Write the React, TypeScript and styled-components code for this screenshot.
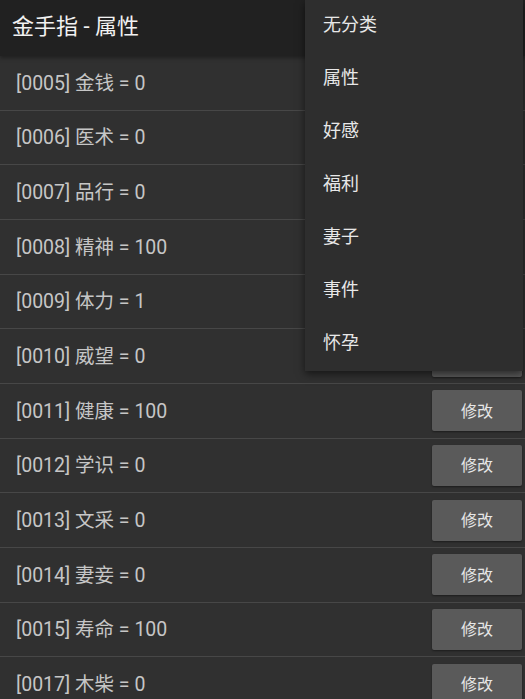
import React from 'react';
import styled, { createGlobalStyle } from 'styled-components';

const GlobalStyle = createGlobalStyle`
  html, body {
    margin: 0;
    padding: 0;
    background: #303030;
  }
  body {
    font-family: Roboto, "Noto Sans CJK SC", sans-serif;
  }
`;

const Screen = styled.div`
  position: relative;
  width: 525px;
  height: 699px;
  overflow: hidden;
  background: #303030;
`;

const Header = styled.div`
  position: relative;
  z-index: 1;
  height: 56px;
  display: flex;
  align-items: center;
  padding-left: 12px;
  padding-bottom: 9px;
  box-sizing: border-box;
  background: #212121;
  box-shadow: 0 2px 4px rgba(0, 0, 0, 0.35);
`;

const Title = styled.div`
  font-size: 22px;
  color: #f2f2f2;
`;

const List = styled.div`
  display: flex;
  flex-direction: column;
`;

const Row = styled.div`
  height: 54.67px;
  flex-shrink: 0;
  box-sizing: border-box;
  display: flex;
  align-items: center;
  justify-content: space-between;
  padding-left: 16px;
  padding-right: 3px;
  border-bottom: 1px solid #474747;
`;

const Label = styled.div`
  font-size: 19.5px;
  color: #c6c6c6;
  margin-bottom: 3px;
`;

const EditButton = styled.button`
  width: 90px;
  height: 41px;
  border: none;
  border-radius: 2px;
  background: #5a5a5a;
  color: #e6e6e6;
  font-family: Roboto, "Noto Sans CJK SC", sans-serif;
  font-size: 16px;
  box-shadow: 0 1px 2px rgba(0, 0, 0, 0.4);
  padding: 0 0 2px;
`;

const Menu = styled.div`
  position: absolute;
  z-index: 2;
  top: 0;
  left: 305px;
  width: 218px;
  height: 371px;
  display: flex;
  flex-direction: column;
  background: #2e2e2e;
  box-shadow: 0 3px 8px rgba(0, 0, 0, 0.55);
`;

const MenuItem = styled.div`
  height: 53px;
  display: flex;
  align-items: center;
  padding-left: 18px;
  padding-bottom: 7px;
  box-sizing: border-box;
  font-size: 18px;
  color: #e8e8e8;
`;

const items = [
  { id: '0005', name: '金钱', value: 0 },
  { id: '0006', name: '医术', value: 0 },
  { id: '0007', name: '品行', value: 0 },
  { id: '0008', name: '精神', value: 100 },
  { id: '0009', name: '体力', value: 1 },
  { id: '0010', name: '威望', value: 0 },
  { id: '0011', name: '健康', value: 100 },
  { id: '0012', name: '学识', value: 0 },
  { id: '0013', name: '文采', value: 0 },
  { id: '0014', name: '妻妾', value: 0 },
  { id: '0015', name: '寿命', value: 100 },
  { id: '0017', name: '木柴', value: 0 },
];

const categories = ['无分类', '属性', '好感', '福利', '妻子', '事件', '怀孕'];

const App = () => {
  return (
    <>
      <GlobalStyle />
      <Screen>
        <Header>
          <Title>金手指 - 属性</Title>
        </Header>
        <List>
          {items.map(item => (
            <Row key={item.id}>
              <Label>{`[${item.id}] ${item.name} = ${item.value}`}</Label>
              <EditButton>修改</EditButton>
            </Row>
          ))}
        </List>
        <Menu>
          {categories.map(c => <MenuItem key={c}>{c}</MenuItem>)}
        </Menu>
      </Screen>
    </>
  );
};

export default App;
